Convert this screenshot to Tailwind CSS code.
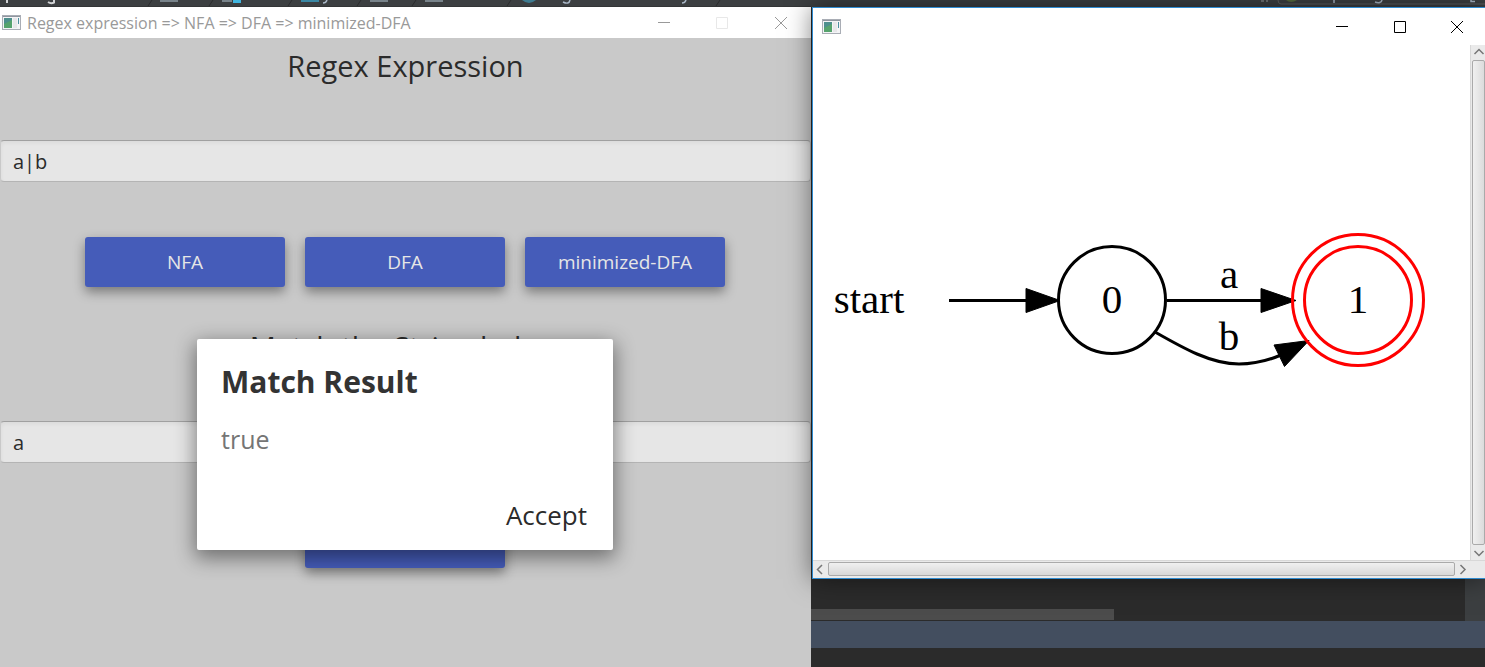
<!DOCTYPE html>
<html lang="en">
<head>
<meta charset="utf-8">
<title>Regex expression =&gt; NFA =&gt; DFA =&gt; minimized-DFA</title>
<script src="https://cdn.jsdelivr.net/npm/@tailwindcss/browser@4"></script>
</head>
<body class="flex h-screen flex-col overflow-hidden bg-[#2b2b2b] font-['Open_Sans','Noto_Sans',sans-serif] text-[#2b2b2b]">
  <!-- Editor tab strip behind the windows -->
  <div class="flex h-[7px] shrink-0 justify-between overflow-hidden bg-[#3c3f41]" aria-hidden="true">
    <svg class="h-[7px] w-[811px] shrink-0" viewBox="0 0 811 7" fill="none">
      <path d="M0 6.5H811" stroke="#333536"/>
      <path d="M7 0V3M48 2Q51 4 54 2.500V0" stroke="#d0d2d4" stroke-width="2"/>
      <path d="M160 1H178M222 1H232M370 1H388M425 1H443" stroke="#78838a" stroke-width="2"/>
      <path d="M301 1H319" stroke="#3a87a3" stroke-width="2"/>
      <path d="M233 0H241V3H233Z" fill="#40b6e0"/>
      <path d="M323 3Q326 3 327 0M563 2Q569 5 570 0M682 3Q685 3 686 0" stroke="#a9b7c6" stroke-width="1.500"/>
      <path d="M522 0Q529 6 536 0Z" fill="#3e7b90"/>
      <path d="M152 0L148 6M213 0L209 6M292 0L288 6M361 0L357 6M416 0L412 6M511 0L507 6M720 0L716 6" stroke="#2b2d2e"/>
    </svg>
    <svg class="h-[7px] w-[225px] shrink-0" viewBox="0 0 225 7" fill="none">
      <path d="M1 1H4M7 0V2" stroke="#9da3a6"/>
      <path d="M18 0Q18 4 21 4H225" stroke="#5e6162"/>
      <path d="M26 0Q31 4 37 0Z" fill="#566b3f"/>
      <path d="M74 0V3M115 2Q121 4 122 0M211 0V1.500H215" stroke="#a9b7c6" stroke-width="1.500"/>
    </svg>
  </div>

  <main class="grid min-h-0 flex-1 grid-cols-[811fr_674fr]">
    <!-- Converter window -->
    <section class="flex min-w-0 flex-col bg-[#c9c9c9]">
      <header class="flex h-[31px] shrink-0 items-center bg-white pl-[2px] text-[#999999]">
        <svg class="h-4 w-5 shrink-0" viewBox="0 0 20 16" aria-hidden="true">
          <rect x=".5" y=".5" width="18" height="14" fill="#f4f4f6" stroke="#a9adb5"/>
          <path d="M1 1.500H18" stroke="#8f969f"/>
          <rect x="2" y="3" width="8" height="10" fill="#4d8f8d"/><path d="M2 13V9L10 5V13Z" fill="#56a36d"/>
          <rect x="11" y="3" width="4" height="10" fill="#e7e7e9"/><path d="M16.500 3V9" stroke="#4d8fa0"/>
        </svg>
        <h1 class="ml-[5px] flex-1 truncate text-base leading-6">Regex expression =&gt; NFA =&gt; DFA =&gt; minimized-DFA</h1>
        <div class="flex h-full">
          <button aria-label="Minimize" class="flex w-[58px] items-center justify-center"><svg class="h-3 w-3" viewBox="0 0 12 12" fill="none" stroke="currentColor"><path d="M0 5.500H12"/></svg></button>
          <button aria-label="Maximize" disabled class="flex w-[58px] items-center justify-center text-[#e8e8e8]"><svg class="h-3 w-3" viewBox="0 0 12 12" fill="none" stroke="currentColor"><path d="M.5 .5H11.500V11.500H.5Z"/></svg></button>
          <button aria-label="Close" class="flex w-[60px] items-center justify-center"><svg class="h-3 w-3" viewBox="0 0 12 12" fill="none" stroke="currentColor"><path d="M0 0L12 12M12 0L0 12"/></svg></button>
        </div>
      </header>

      <div class="relative flex min-h-0 flex-1 flex-col">
        <label for="regex" class="mt-[7px] text-center text-[29px] leading-[42px]">Regex Expression</label>
        <input id="regex" type="text" value="a|b" class="mt-[53px] h-[42px] w-full rounded-sm border border-t-[#a0a0a0] border-r-[#b4b4b4] border-b-[#b4b4b4] border-l-[#c9c9c9] bg-[#e6e6e6] px-3 text-xl inset-shadow-sm">
        <div class="mt-[55px] flex justify-center gap-5 pr-[1px] text-[19px] text-[#e6e6e6]">
          <button class="h-[50px] w-[200px] rounded-[3px] bg-[#455cb9] shadow-[0_5px_12px_rgba(0,0,0,0.4)]">NFA</button>
          <button class="h-[50px] w-[200px] rounded-[3px] bg-[#455cb9] shadow-[0_5px_12px_rgba(0,0,0,0.4)]">DFA</button>
          <button class="h-[50px] w-[200px] rounded-[3px] bg-[#455cb9] shadow-[0_5px_12px_rgba(0,0,0,0.4)]">minimized-DFA</button>
        </div>
        <label for="sample" class="mt-[39px] text-center text-[29px] leading-[42px]">Match the String below</label>
        <input id="sample" type="text" value="a" class="mt-[53px] h-[42px] w-full rounded-sm border border-t-[#a0a0a0] border-r-[#b4b4b4] border-b-[#b4b4b4] border-l-[#c9c9c9] bg-[#e6e6e6] px-3 text-xl inset-shadow-sm">
        <div class="mt-[55px] flex justify-center pr-[1px]">
          <button aria-label="Match" class="h-[50px] w-[200px] rounded-[3px] bg-[#455cb9] shadow-[0_5px_12px_rgba(0,0,0,0.4)]"></button>
        </div>

        <!-- Result dialog, over the form -->
        <div class="absolute inset-x-0 top-[301px] flex justify-center pr-[1px]">
          <div role="dialog" aria-labelledby="result-title" class="flex h-[211px] w-[416px] flex-col rounded-[2px] bg-white px-6 pt-5 pb-3 shadow-[0_6px_20px_2px_rgba(0,0,0,0.45)]">
            <h2 id="result-title" class="text-[30px] leading-[46px] font-bold text-[#333333]">Match Result</h2>
            <p class="mt-4 text-[25px] leading-9 text-[#757575]">true</p>
            <button class="mt-auto self-end px-[2px] text-[26px] leading-[46px]">Accept</button>
          </div>
        </div>
      </div>
    </section>

    <div class="flex min-w-0 flex-col">
      <!-- Automaton window -->
      <section class="relative ml-[1px] flex min-h-0 flex-1 flex-col border-y border-l border-[#2f8bd0] bg-white shadow-[0_0_24px_rgba(0,0,0,0.5)]">
        <header class="flex h-[37px] shrink-0 items-center justify-between pl-[9px] text-black">
          <svg class="h-4 w-5 shrink-0" viewBox="0 0 20 16" aria-hidden="true">
            <rect x=".5" y=".5" width="18" height="14" fill="#f4f4f6" stroke="#a9adb5"/>
            <path d="M1 1.500H18" stroke="#8f969f"/>
            <rect x="2" y="3" width="8" height="10" fill="#4d8f8d"/><path d="M2 13V9L10 5V13Z" fill="#56a36d"/>
            <rect x="11" y="3" width="4" height="10" fill="#e7e7e9"/><path d="M16.500 3V9" stroke="#4d8fa0"/>
          </svg>
          <div class="flex h-full">
            <button aria-label="Minimize" class="flex w-[58px] items-center justify-center"><svg class="h-3 w-3" viewBox="0 0 12 12" fill="none" stroke="currentColor"><path d="M0 5.500H12"/></svg></button>
            <button aria-label="Maximize" class="flex w-[58px] items-center justify-center"><svg class="h-3 w-3" viewBox="0 0 12 12" fill="none" stroke="currentColor"><path d="M.5 .5H11.500V11.500H.5Z"/></svg></button>
            <button aria-label="Close" class="flex w-14 items-center justify-center"><svg class="h-3 w-3" viewBox="0 0 12 12" fill="none" stroke="currentColor"><path d="M0 0L12 12M12 0L0 12"/></svg></button>
          </div>
        </header>
        <div class="flex min-h-0 flex-1">
          <div class="min-w-0 flex-1 overflow-hidden">
            <svg class="h-[515px] w-[657px]" viewBox="0 0 657 515" role="img" aria-label="Minimized DFA" fill="none" stroke="black" stroke-width="3">
              <path d="M136 255.500H216M354 255.500H451"/>
              <path d="M342 287C370 303 398 319 426 319C440 319 454 316 468 310"/>
              <g fill="black" stroke-width="1">
                <path d="M213 243.500L247 255.500L213 267.500Z"/>
                <path d="M448 243.500L483 255.500L448 267.500Z"/>
                <path d="M461 300L496 295.500L471.500 321.500Z"/>
              </g>
              <circle cx="299" cy="255" r="53.500"/>
              <g stroke="red"><circle cx="545" cy="255" r="53.500"/><circle cx="545" cy="255" r="65.500"/></g>
              <g class="text-[41px]" font-family="Liberation Serif, serif" fill="black" stroke="none" text-anchor="middle">
                <text x="56" y="268">start</text>
                <text x="299" y="268">0</text>
                <text x="545" y="268">1</text>
                <text x="416" y="243">a</text>
                <text x="416" y="305">b</text>
              </g>
            </svg>
          </div>
          <div class="flex w-[15px] shrink-0 flex-col items-center border-l border-[#d8d8d8] bg-[#eaeaea] text-[#777777]" aria-hidden="true">
            <svg class="h-[15px] w-[14px] shrink-0" viewBox="0 0 14 15" fill="none" stroke="currentColor" stroke-width="1.500"><path d="M3.500 9L8 4.500L12.500 9"/></svg>
            <div class="ml-[1px] w-[13px] flex-1 rounded-[2px] border border-[#aaaaaa] bg-linear-to-r from-[#f0f0f0] to-[#dcdcdc]"></div>
            <svg class="h-[15px] w-[14px] shrink-0" viewBox="0 0 14 15" fill="none" stroke="currentColor" stroke-width="1.500"><path d="M3.500 6L8 10.500L12.500 6"/></svg>
          </div>
        </div>
        <div class="flex h-[18px] shrink-0 items-center border-t border-[#d8d8d8] bg-[#eaeaea] pr-[15px] pb-[1px] text-[#777777]" aria-hidden="true">
          <svg class="h-4 w-[15px] shrink-0" viewBox="0 0 15 16" fill="none" stroke="currentColor" stroke-width="1.500"><path d="M9 4L4.500 8.500L9 13"/></svg>
          <div class="h-[14px] flex-1 rounded-[2px] border border-[#aaaaaa] bg-linear-to-b from-[#f0f0f0] to-[#d8d8d8]"></div>
          <svg class="h-4 w-[15px] shrink-0" viewBox="0 0 15 16" fill="none" stroke="currentColor" stroke-width="1.500"><path d="M5.500 4L10 8.500L5.500 13"/></svg>
        </div>
      </section>

      <!-- Editor area below the automaton window -->
      <div class="flex h-[42px] shrink-0 justify-between" aria-hidden="true">
        <div class="flex flex-1 items-end pb-[1px]"><div class="h-[11px] w-[303px] bg-[#4c4c4c]"></div></div>
        <div class="w-5 bg-[#3c3f41]"></div>
      </div>
      <div class="h-[27px] shrink-0 bg-[#434e5f]"></div>
      <div class="h-[19px] shrink-0 bg-[#2b2b2b]"></div>
    </div>
  </main>
</body>
</html>
